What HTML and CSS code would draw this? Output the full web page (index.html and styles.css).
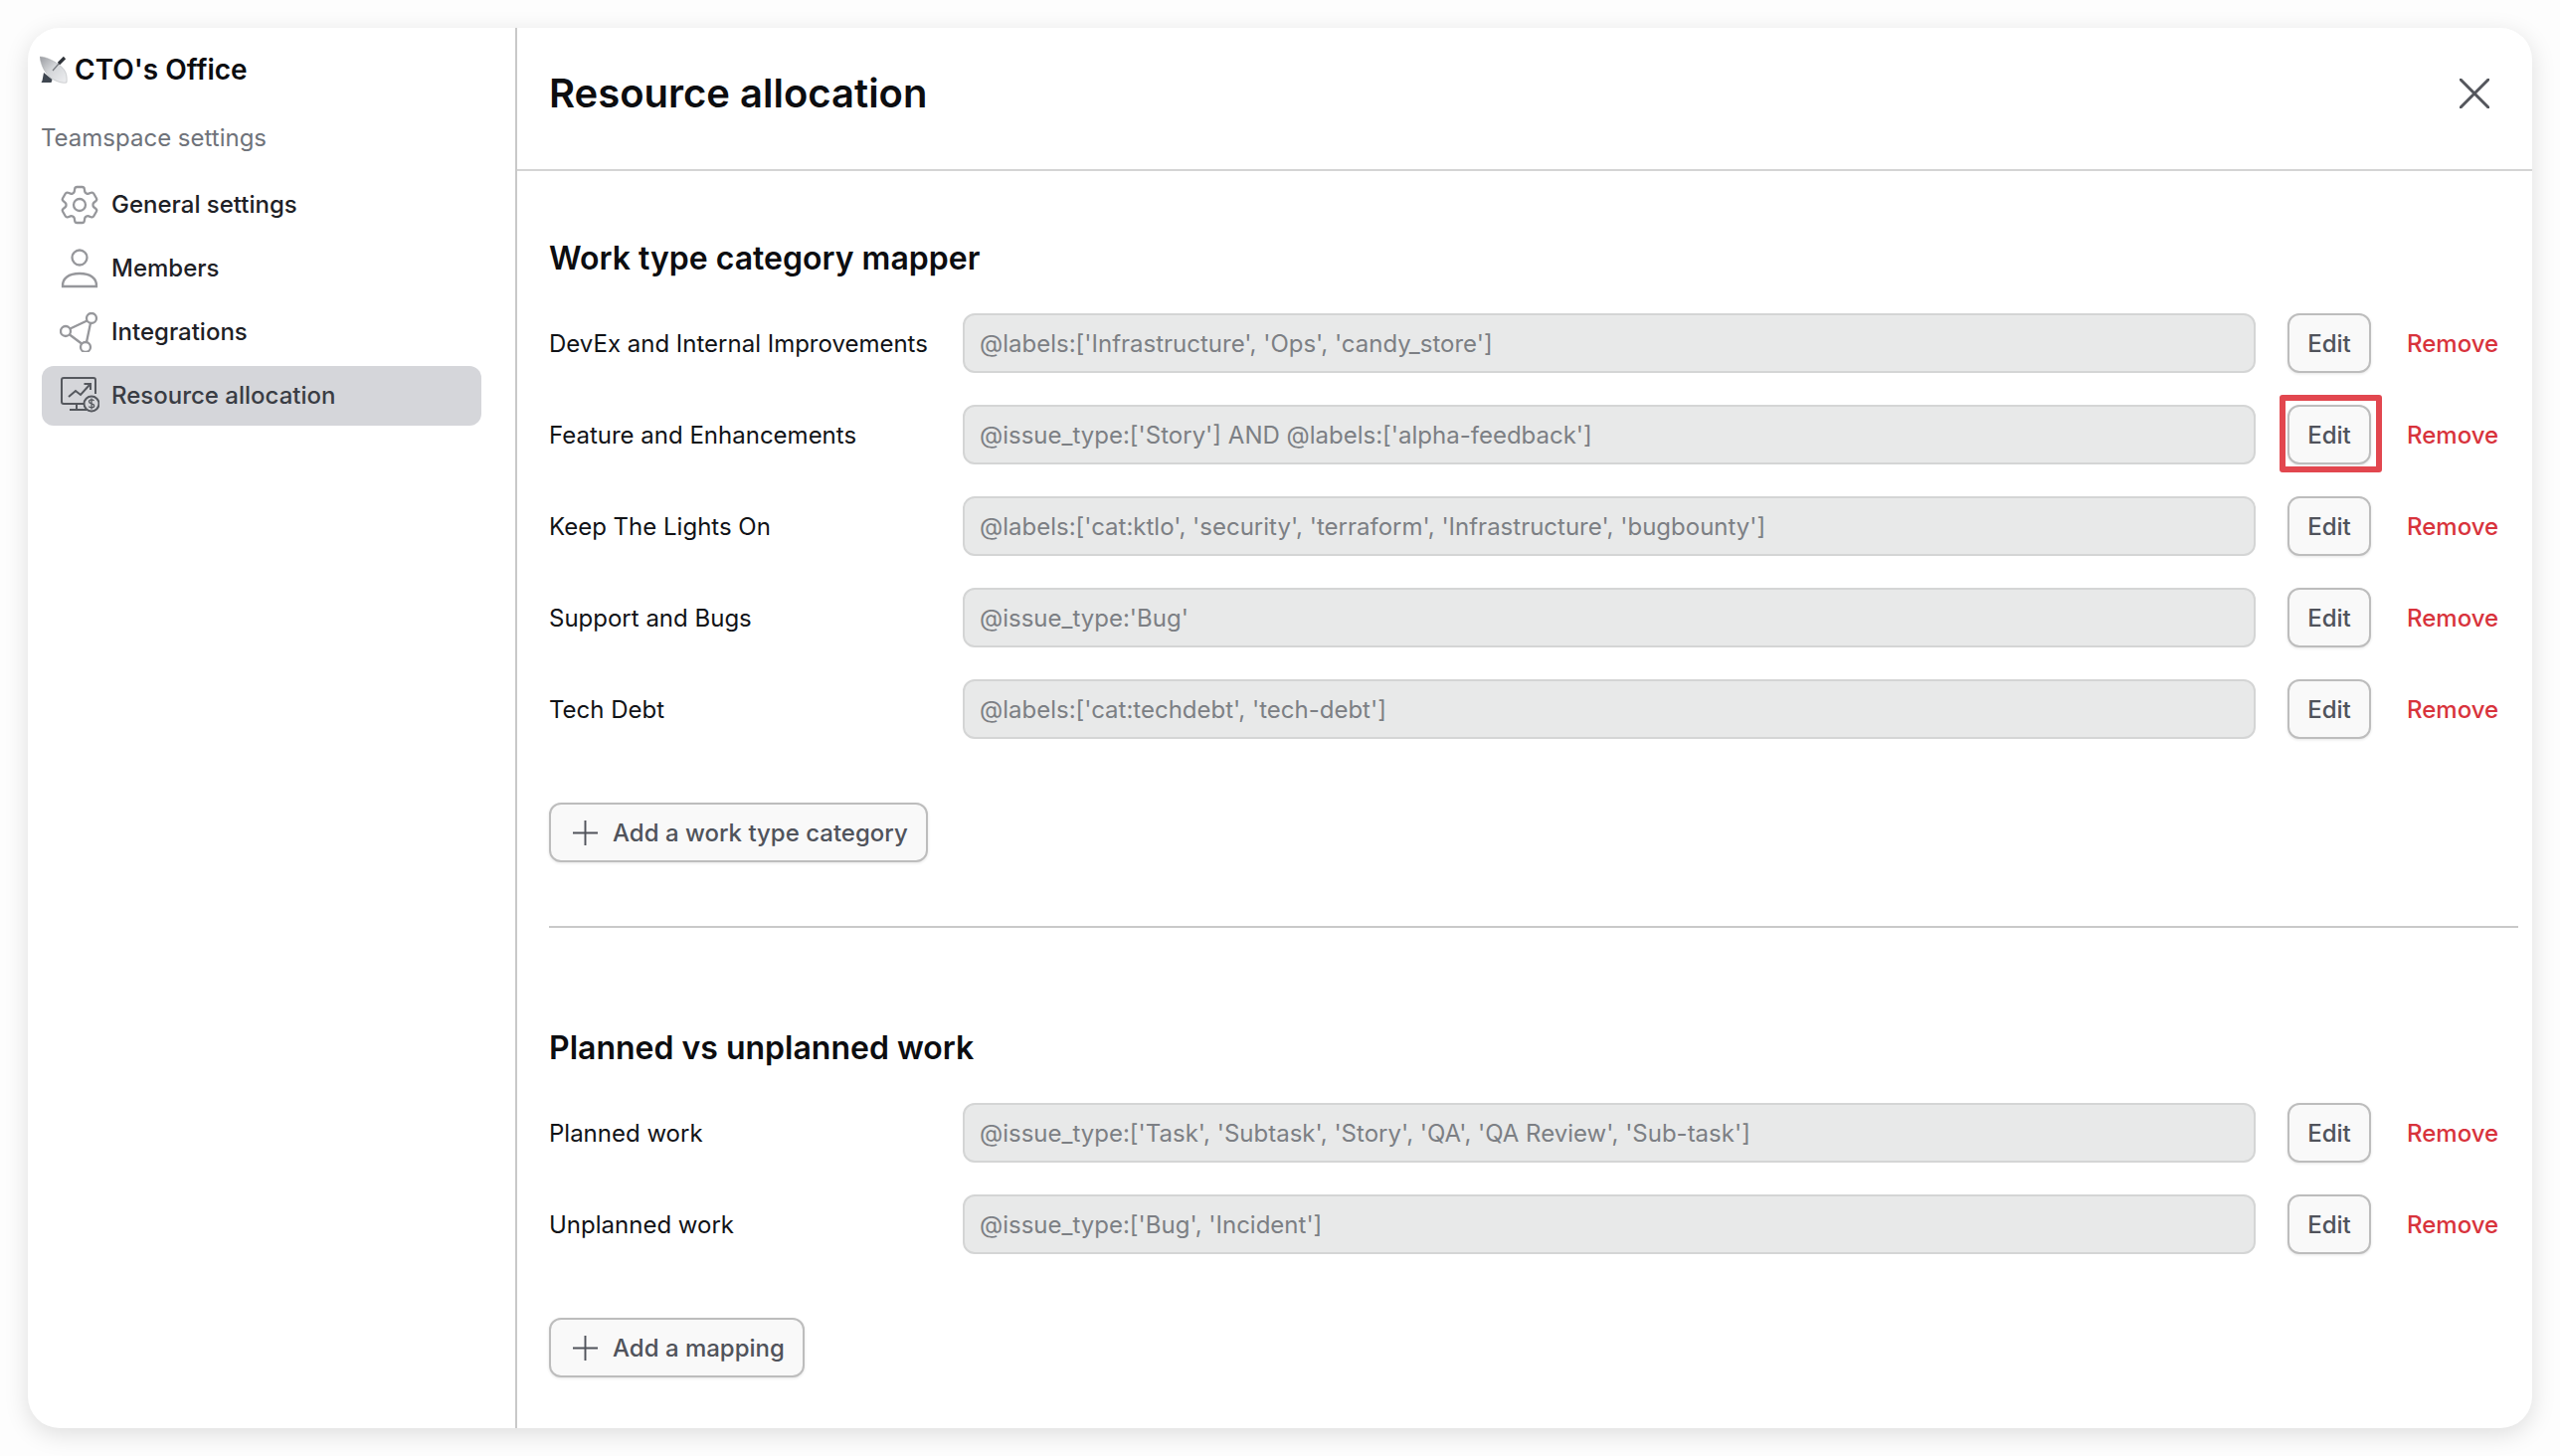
FILE: index.html
```html
<!DOCTYPE html>
<html lang="en">
<head>
<meta charset="utf-8">
<title>Resource allocation</title>
<link rel="stylesheet" href="styles.css">
</head>
<body>
<div class="card">
  <aside class="sidebar">
    <div class="space">
      <svg class="space-icon" viewBox="0 0 28 28" aria-hidden="true">
        <defs>
          <linearGradient id="dish" x1="0" y1="0" x2="1" y2="1">
            <stop offset="0" stop-color="#9a9ca1"/>
            <stop offset=".45" stop-color="#d3d5d8"/>
            <stop offset="1" stop-color="#eeeff1"/>
          </linearGradient>
        </defs>
        <path d="M4 17l-1.500 8-1 2h10l1-3z" fill="#3f4650"/>
        <path d="M0 1C1 9 5 18 12 23c5 3 11 5 15 4 1-9-2-14-8-18C14 5 6 1 0 1z" fill="url(#dish)" stroke="#a9abae" stroke-width=".5"/>
        <path d="M13 15l7-8" stroke="#777a7f" stroke-width="1.200"/>
        <path d="M19 8l6-6" stroke="#2e3238" stroke-width="3.200"/>
      </svg>
      <span class="space-name">CTO's Office</span>
    </div>
    <div class="sidebar-label">Teamspace settings</div>
    <nav class="nav">
      <a class="nav-item">
        <svg class="nav-icon nav-icon-gear" viewBox="2 2 20 20" aria-hidden="true"><path d="M9.594 3.940c.090-.542.560-.940 1.110-.940h2.593c.550 0 1.020.398 1.110.940l.213 1.281c.063.374.313.686.645.870.074.040.147.083.220.127.325.196.720.257 1.075.124l1.217-.456a1.125 1.125 0 0 1 1.370.490l1.296 2.247a1.125 1.125 0 0 1-.260 1.431l-1.003.827c-.293.241-.438.613-.430.992a7.723 7.723 0 0 1 0 .255c-.008.378.137.750.430.991l1.004.827c.424.350.534.955.260 1.430l-1.298 2.247a1.125 1.125 0 0 1-1.369.491l-1.217-.456c-.355-.133-.750-.072-1.076.124a6.470 6.470 0 0 1-.220.128c-.331.183-.581.495-.644.869l-.213 1.281c-.090.543-.560.940-1.110.940h-2.594c-.550 0-1.019-.398-1.110-.940l-.213-1.281c-.062-.374-.312-.686-.644-.870a6.520 6.520 0 0 1-.220-.127c-.325-.196-.720-.257-1.076-.124l-1.217.456a1.125 1.125 0 0 1-1.369-.490l-1.297-2.247a1.125 1.125 0 0 1 .260-1.431l1.004-.827c.292-.240.437-.613.430-.991a6.932 6.932 0 0 1 0-.255c.007-.380-.138-.751-.430-.992l-1.004-.827a1.125 1.125 0 0 1-.260-1.430l1.297-2.247a1.125 1.125 0 0 1 1.370-.491l1.216.456c.356.133.751.072 1.076-.124.072-.044.146-.086.220-.128.332-.183.582-.495.644-.869l.214-1.280Z"/><circle cx="12" cy="12" r="3"/></svg>
        <span class="nav-text">General settings</span>
      </a>
      <a class="nav-item">
        <svg class="nav-icon" viewBox="0 0 40 40" aria-hidden="true"><circle cx="20" cy="9" r="7.500"/><path d="M3 38c-.500-8 6-13 17-13s17.500 5 17 13z"/></svg>
        <span class="nav-text">Members</span>
      </a>
      <a class="nav-item">
        <svg class="nav-icon" viewBox="0 0 40 40" aria-hidden="true"><circle cx="32" cy="6" r="5"/><circle cx="6" cy="19" r="5"/><circle cx="26" cy="35" r="5"/><path d="M27.500 8.500l-17 8M10 22.500l12 9M31 11l-4 19"/></svg>
        <span class="nav-text">Integrations</span>
      </a>
      <a class="nav-item nav-item-active">
        <svg class="nav-icon nav-icon-dark" viewBox="0 0 40 40" aria-hidden="true"><path d="M24 28H4a2 2 0 0 1-2-2V4a2 2 0 0 1 2-2h30a2 2 0 0 1 2 2v14"/><path d="M17 28v6M10 34h17"/><path d="M9 21l7-6 5 4 9-10M24.500 8H31v6"/><circle cx="32" cy="28" r="7.500"/><path d="M34.500 25c-1-1.500-5-1.500-5 .8 0 2.800 5.200 1.400 5.200 4.200 0 2.200-4.200 2.200-5.400.6M32 22.500v11" stroke-width="1.300"/></svg>
        <span class="nav-text">Resource allocation</span>
      </a>
    </nav>
  </aside>
  <main class="main">
    <header class="main-header">
      <h1 class="main-title">Resource allocation</h1>
      <svg class="close" viewBox="0 0 30 30" aria-hidden="true"><path d="M1 1l28 28M29 1L1 29"/></svg>
    </header>
    <div class="content">
      <section class="section section-first">
        <h2 class="section-title">Work type category mapper</h2>
        <div class="rows">
          <div class="row">
            <div class="row-label">DevEx and Internal Improvements</div>
            <div class="query">@labels:['Infrastructure', 'Ops', 'candy_store']</div>
            <button class="btn">Edit</button>
            <a class="remove">Remove</a>
          </div>
          <div class="row">
            <div class="row-label">Feature and Enhancements</div>
            <div class="query">@issue_type:['Story'] AND @labels:['alpha-feedback']</div>
            <button class="btn btn-marked">Edit</button>
            <a class="remove">Remove</a>
          </div>
          <div class="row">
            <div class="row-label">Keep The Lights On</div>
            <div class="query">@labels:['cat:ktlo', 'security', 'terraform', 'Infrastructure', 'bugbounty']</div>
            <button class="btn">Edit</button>
            <a class="remove">Remove</a>
          </div>
          <div class="row">
            <div class="row-label">Support and Bugs</div>
            <div class="query">@issue_type:'Bug'</div>
            <button class="btn">Edit</button>
            <a class="remove">Remove</a>
          </div>
          <div class="row">
            <div class="row-label">Tech Debt</div>
            <div class="query">@labels:['cat:techdebt', 'tech-debt']</div>
            <button class="btn">Edit</button>
            <a class="remove">Remove</a>
          </div>
        </div>
        <button class="btn btn-add">
          <svg class="plus" viewBox="0 0 26 26" aria-hidden="true"><path d="M13 0v26M0 13h26"/></svg>
          <span>Add a work type category</span>
        </button>
      </section>
      <hr class="divider">
      <section class="section">
        <h2 class="section-title">Planned vs unplanned work</h2>
        <div class="rows">
          <div class="row">
            <div class="row-label">Planned work</div>
            <div class="query">@issue_type:['Task', 'Subtask', 'Story', 'QA', 'QA Review', 'Sub-task']</div>
            <button class="btn">Edit</button>
            <a class="remove">Remove</a>
          </div>
          <div class="row">
            <div class="row-label">Unplanned work</div>
            <div class="query">@issue_type:['Bug', 'Incident']</div>
            <button class="btn">Edit</button>
            <a class="remove">Remove</a>
          </div>
        </div>
        <button class="btn btn-add">
          <svg class="plus" viewBox="0 0 26 26" aria-hidden="true"><path d="M13 0v26M0 13h26"/></svg>
          <span>Add a mapping</span>
        </button>
      </section>
    </div>
  </main>
</div>
</body>
</html>
```

FILE: styles.css
```css
* { box-sizing: border-box; }
html, body { height: 100%; }
body {
  margin: 0;
  padding: 28px;
  background: #fdfdfd;
  font-family: Inter, "Liberation Sans", sans-serif;
  font-size: 24px;
  color: #16181d;
  overflow: hidden;
}
.card {
  display: flex;
  width: 2518px;
  height: 1408px;
  background: #fff;
  border-radius: 32px;
  box-shadow: 0 6px 24px rgba(0, 0, 0, .13);
  overflow: hidden;
}
.sidebar {
  flex: 0 0 492px;
  padding: 0 34px 0 14px;
  border-right: 2px solid #c9c9c9;
}
.space {
  display: flex;
  align-items: center;
  gap: 7px;
  height: 84px;
  margin-left: -2px;
}
.space-icon { width: 28px; height: 28px; flex: none; }
.space-name { font-size: 28px; font-weight: 600; color: #0c0d10; }
.sidebar-label {
  margin-top: 10px;
  margin-left: -1px;
  height: 34px;
  line-height: 34px;
  color: #6f737a;
  font-size: 24px;
}
.nav { display: flex; flex-direction: column; gap: 4px; margin-top: 20px; }
.nav-item {
  display: flex;
  align-items: center;
  gap: 12px;
  height: 60px;
  padding: 0 18px;
  border-radius: 12px;
  font-weight: 500;
  color: #1e2126;
}
.nav-text { padding-bottom: 2px; }
.nav-item-active { background: #d5d6da; color: #3a3d44; }
.nav-icon {
  width: 40px;
  height: 40px;
  flex: none;
  fill: none;
  stroke: #96979b;
  stroke-width: 2.3;
}
.nav-icon-gear { stroke-width: 1.150; }
.nav-icon-dark { stroke: #55585e; stroke-width: 2; }
.main { flex: 1; min-width: 0; display: flex; flex-direction: column; }
.main-header {
  flex: none;
  display: flex;
  align-items: center;
  justify-content: space-between;
  height: 144px;
  padding: 0 43px 10px 32px;
  border-bottom: 2px solid #d4d4d4;
}
.main-title { margin: 0 0 2px; font-size: 40px; font-weight: 600; color: #0c0d10; }
.close { width: 30px; height: 30px; fill: none; stroke: #54565c; stroke-width: 3; stroke-linecap: round; }
.content { padding: 0 14px 0 32px; }
.section { display: flex; flex-direction: column; align-items: flex-start; }
.section-first { margin-top: 68px; }
.section-title {
  margin: 0 0 35px;
  height: 40px;
  line-height: 40px;
  font-size: 32px;
  font-weight: 600;
  color: #0c0d10;
}
.rows { display: flex; flex-direction: column; gap: 32px; width: 100%; }
.row { display: flex; align-items: center; height: 60px; }
.row-label { flex: 0 0 416px; color: #111317; }
.query {
  flex: 0 0 1300px;
  height: 60px;
  line-height: 57px;
  padding: 0 15px;
  background: #e8e9e9;
  border: 2px solid #d4d5d5;
  border-radius: 12px;
  color: #7c7f84;
}
.btn {
  font-family: inherit;
  font-size: 24px;
  font-weight: 500;
  color: #50535b;
  background: #f9f9f9;
  border: 2px solid #bdbdbd;
  border-radius: 12px;
  height: 60px;
  box-shadow: 0 1px 3px rgba(0, 0, 0, .1);
}
.row .btn { flex: 0 0 84px; margin-left: 32px; padding: 0; }
.btn-marked { position: relative; }
.btn-marked::after {
  content: "";
  position: absolute;
  inset: -12px -13px -10px -10px;
  border: 6px solid #e2474f;
  border-radius: 3px;
}
.remove { margin-left: 36px; color: #d8333c; font-weight: 500; }
.btn-add {
  display: flex;
  align-items: center;
  gap: 15px;
  margin-top: 64px;
  padding: 0 18px 0 22px;
}
.plus { width: 25px; height: 25px; fill: none; stroke: #50535b; stroke-width: 2; }
.divider {
  width: 100%;
  height: 2px;
  margin: 64px 0 101px;
  border: 0;
  background: #c9c9c9;
}
```
